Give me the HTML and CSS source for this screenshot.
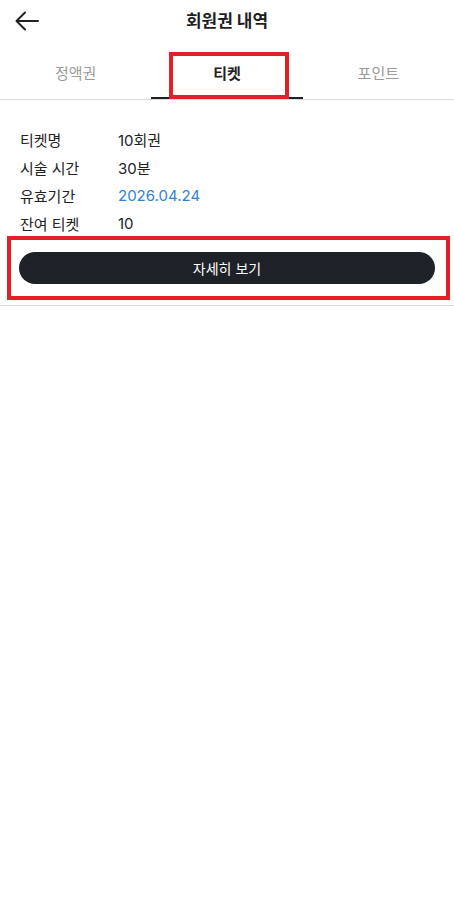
FILE: index.html
```html
<!DOCTYPE html>
<html lang="ko">

<head>
    <meta charset="UTF-8">
    <meta name="viewport" content="width=device-width, initial-scale=1.0">
    <title>회원권 내역</title>
    <link rel="stylesheet" href="styles.css">
</head>

<body>
    <div class="page">
        <header class="topbar">
            <button class="back" aria-label="뒤로">
                <svg width="26" height="20" viewBox="0 0 26 20">
                    <path d="M24 10H3M11 1.5L2.5 10L11 18.5" fill="none" stroke="#222" stroke-width="2" stroke-linecap="round" stroke-linejoin="round"/>
                </svg>
            </button>
            <h1>회원권 내역</h1>
        </header>

        <nav class="tabs">
            <div class="tab">정액권</div>
            <div class="tab active">티켓</div>
            <div class="tab">포인트</div>
            <div class="mark mark-tab"></div>
        </nav>

        <section class="ticket">
            <div class="info">
                <div class="row"><span class="label">티켓명</span><span class="value">10회권</span></div>
                <div class="row"><span class="label">시술 시간</span><span class="value">30분</span></div>
                <div class="row"><span class="label">유효기간</span><span class="value date">2026.04.24</span></div>
                <div class="row"><span class="label">잔여 티켓</span><span class="value">10</span></div>
            </div>
            <button class="detail">자세히 보기</button>
            <div class="mark mark-btn"></div>
        </section>
    </div>
</body>

</html>
```

FILE: styles.css
```css
body {
    margin: 0;
    padding: 0;
    background: #fff;
    font-family: "Inter", "Noto Sans CJK KR", sans-serif;
    color: #222;
}

.page {
    width: 454px;
}

.topbar {
    position: relative;
    height: 44px;
    display: flex;
    align-items: center;
    justify-content: center;
}

.topbar h1 {
    margin: 0;
    font-size: 17px;
    font-weight: 700;
    line-height: 22px;
    margin-top: -2px;
    color: #1f1f1f;
}

.back {
    position: absolute;
    left: 14px;
    top: 11px;
    padding: 0;
    border: none;
    background: none;
}

.tabs {
    position: relative;
    display: grid;
    grid-template-columns: 1fr 1fr 1fr;
    height: 55px;
    border-bottom: 1px solid #dcdcdc;
}

.tab {
    display: flex;
    align-items: center;
    justify-content: center;
    font-size: 15px;
    font-weight: 400;
    color: #9a9a9a;
    padding-top: 2px;
}

.tab.active {
    color: #222;
    font-weight: 700;
    box-shadow: inset 0 -2px 0 #1f2129;
}

.ticket {
    position: relative;
    padding: 25px 19px 21px;
    border-bottom: 1px solid #dcdcdc;
}

.info {
    padding-left: 1px;
}

.row {
    display: flex;
    height: 28px;
    align-items: center;
    font-size: 15px;
}

.label {
    width: 98px;
}

.date {
    color: #2f83d9;
}

.detail {
    display: block;
    width: 100%;
    height: 32px;
    margin-top: 15px;
    border: none;
    border-radius: 16px;
    background: #1f2129;
    color: #fff;
    font-family: inherit;
    font-size: 14px;
    font-weight: 400;
}

/* red annotation boxes */
.mark {
    position: absolute;
    border: 4px solid #e41e25;
    box-sizing: border-box;
}

.mark-tab {
    left: 169px;
    top: 8px;
    width: 120px;
    height: 47px;
}

.mark-btn {
    left: 7px;
    top: 136px;
    width: 443px;
    height: 64px;
}
```
